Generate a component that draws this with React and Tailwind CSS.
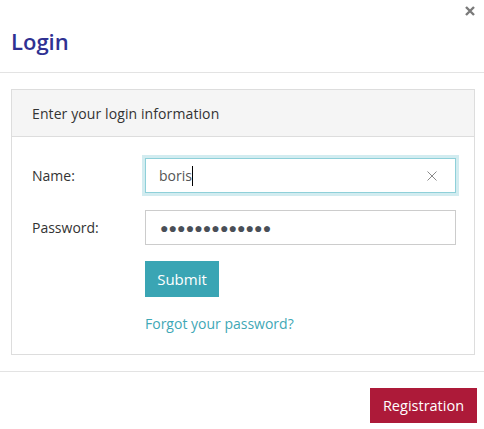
import React from "react";

const App = () => {
  return (
    <div className="relative w-[484px] h-[429px] bg-white font-['Open_Sans',sans-serif] text-[#333]">
      <button
        type="button"
        className="absolute top-[6px] right-[9px] w-[10px] h-[10px] text-[#7a7a7a]"
        aria-label="Close"
      >
        <svg viewBox="0 0 10 10" className="w-[10px] h-[10px]">
          <path d="M1 1 L9 9 M9 1 L1 9" stroke="currentColor" strokeWidth="2.4" />
        </svg>
      </button>

      <div className="h-[73px] px-[11px] pt-[26px] border-b border-[#e3e3e3]">
        <h1 className="text-[22px] leading-[30px] font-semibold text-[#2f3192]">
          Login
        </h1>
      </div>

      <div className="pl-[11px] pr-[9px] pt-[16px] pb-[16px]">
        <div className="border border-[#dddddd]">
          <div className="h-[47px] px-[20px] flex items-center bg-[#f5f5f5] border-b border-[#dddddd] text-[14px] tracking-[0.1px]">
            Enter your login information
          </div>
          <div className="pl-[20px] pt-[21px] pb-[20px] flex flex-col text-[14px]">
            <div className="flex items-center">
              <label className="w-[113px]">Name:</label>
              <div className="w-[311px] h-[35px] flex items-center pl-[13px] pr-[18px] border border-[#8fd0d9] shadow-[0_0_0_3px_#d2ecf0] text-[#555]">
                <span>boris</span>
                <span className="w-px h-[20px] bg-black"></span>
                <span className="flex-1"></span>
                <svg viewBox="0 0 10 10" className="w-[10px] h-[10px] text-[#8a8a8a]">
                  <path d="M0.5 0.5 L9.5 9.5 M9.5 0.5 L0.5 9.5" stroke="currentColor" strokeWidth="1" />
                </svg>
              </div>
            </div>
            <div className="flex items-center mt-[17px]">
              <label className="w-[113px]">Password:</label>
              <div className="w-[311px] h-[35px] flex items-center pl-[14px] border border-[#cccccc] text-[#4a4f57] text-[14px] tracking-[0.1px]">
                ●●●●●●●●●●●●●
              </div>
            </div>
            <div className="pl-[113px] mt-[16px]">
              <button
                type="button"
                className="w-[74px] h-[36px] bg-[#3aa5b4] text-white text-[15px]"
              >
                Submit
              </button>
            </div>
            <div className="pl-[113px] mt-[17px] leading-[20px]">
              <a href="#" className="text-[#3fa8b6] text-[14px]">
                Forgot your password?
              </a>
            </div>
          </div>
        </div>
      </div>

      <div className="border-t border-[#e3e3e3] pt-[16px] pr-[7px] flex justify-end">
        <button
          type="button"
          className="w-[107px] h-[35px] bg-[#ad1a39] text-white text-[14.5px]"
        >
          Registration
        </button>
      </div>
    </div>
  );
};

export default App;
